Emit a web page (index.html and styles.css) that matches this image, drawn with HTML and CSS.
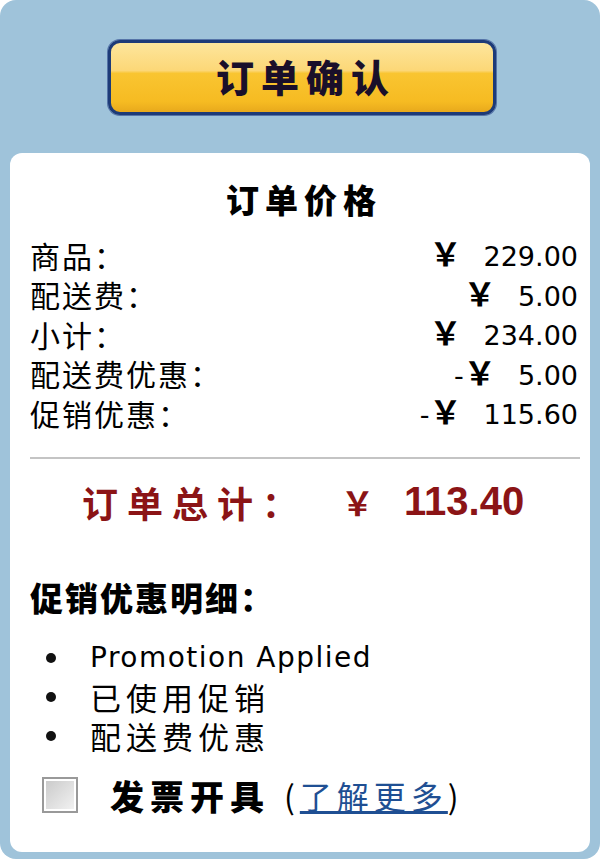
FILE: index.html
```html
<!DOCTYPE html>
<html lang="zh-CN">
<head>
    <meta charset="UTF-8">
    <title>订单确认</title>
    <link rel="stylesheet" href="styles.css">
</head>
<body>
    <div class="frame">
        <div class="btn-row">
            <button class="confirm-btn">订单确认</button>
        </div>

        <div class="panel">
            <h2 class="panel-title">订单价格</h2>

            <div class="price-list">
                <div class="price-row">
                    <span class="label">商品：</span>
                    <span class="value"><span class="yen">￥</span>229.00</span>
                </div>
                <div class="price-row">
                    <span class="label">配送费：</span>
                    <span class="value"><span class="yen">￥</span>5.00</span>
                </div>
                <div class="price-row">
                    <span class="label">小计：</span>
                    <span class="value"><span class="yen">￥</span>234.00</span>
                </div>
                <div class="price-row">
                    <span class="label">配送费优惠：</span>
                    <span class="value">-<span class="yen">￥</span>5.00</span>
                </div>
                <div class="price-row">
                    <span class="label">促销优惠：</span>
                    <span class="value">-<span class="yen">￥</span>115.60</span>
                </div>
            </div>

            <hr class="divider">

            <div class="total">
                <span class="total-label">订单总计：</span>
                <span class="total-yen">￥</span>
                <span class="total-num">113.40</span>
            </div>

            <h3 class="promo-title">促销优惠明细：</h3>
            <ul class="promo-list">
                <li class="latin">Promotion Applied</li>
                <li>已使用促销</li>
                <li>配送费优惠</li>
            </ul>

            <div class="invoice">
                <span class="checkbox"></span>
                <span class="invoice-label">发票开具</span>
                <span class="more">(<a href="#">了解更多</a>)</span>
            </div>
        </div>
    </div>
</body>
</html>
```

FILE: styles.css
```css
body {
    margin: 0;
    padding: 0;
    background-color: #fff;
    font-family: "Noto Sans CJK SC", "DejaVu Sans", sans-serif;
    color: #000;
}

.frame {
    width: 600px;
    height: 859px;
    box-sizing: border-box;
    background-color: #9fc3da;
    border-radius: 16px;
    padding: 40px 10px 7px 10px;
    display: flex;
    flex-direction: column;
}

.btn-row {
    display: flex;
    justify-content: center;
    margin-bottom: 38px;
}

.confirm-btn {
    width: 388px;
    height: 75px;
    margin-left: 4px;
    border: 3px solid #1d3b78;
    border-radius: 12px;
    background: linear-gradient(180deg, #fde69c 0%, #fcd777 40%, #f9c531 44%, #f6bb22 85%, #e8a91c 100%);
    box-shadow: 0 0 0 1px #5574a8;
    font-family: "Noto Sans CJK SC", sans-serif;
    font-size: 38px;
    font-weight: 900;
    letter-spacing: 7px;
    color: #1a0f2a;
    padding: 0 0 4px 8px;
}

.panel {
    flex: 1;
    background-color: #fff;
    border-radius: 12px;
    padding: 20px 12px 0 20px;
}

.panel-title {
    margin: 0 0 10px 0;
    text-align: center;
    font-size: 33px;
    font-weight: 900;
    letter-spacing: 6px;
    line-height: 52px;
}

.price-row {
    display: flex;
    justify-content: space-between;
    align-items: center;
    height: 39.5px;
    font-size: 30px;
    line-height: 38px;
}

.label {
    letter-spacing: 2px;
}

.value {
    font-family: "DejaVu Sans", sans-serif;
    font-size: 27px;
    letter-spacing: 0;
}

.yen {
    font-family: "Noto Sans CJK SC", sans-serif;
    font-size: 32px;
    font-weight: 700;
    margin-right: 22px;
}

.divider {
    border: none;
    border-top: 2px solid #c4c4c4;
    margin: 24px -2px 14px 0;
}

.total {
    display: flex;
    align-items: center;
    height: 58px;
    padding-left: 52px;
    color: #8b1416;
    font-weight: 700;
}

.total-label {
    font-size: 36px;
    letter-spacing: 9px;
}

.total-yen {
    font-size: 33px;
    margin-left: 34px;
}

.total-num {
    font-family: "Liberation Sans", sans-serif;
    font-size: 40px;
    margin-left: 30px;
}

.promo-title {
    margin: 44px 0 20px 0;
    font-size: 33px;
    font-weight: 900;
    letter-spacing: 2px;
    line-height: 44px;
}

.promo-list {
    list-style: none;
    margin: 0;
    padding-left: 16px;
    font-size: 31px;
    line-height: 38px;
    letter-spacing: 5px;
}

.promo-list li {
    display: flex;
    align-items: center;
    height: 39px;
}

.promo-list li::before {
    content: "";
    width: 10px;
    height: 10px;
    border-radius: 50%;
    background-color: #111;
    margin-right: 34px;
    flex-shrink: 0;
}

.promo-list .latin {
    font-family: "DejaVu Sans", sans-serif;
    font-size: 28px;
    letter-spacing: 1.5px;
}

.invoice {
    display: flex;
    align-items: center;
    margin-top: 15px;
    padding-left: 12px;
}

.checkbox {
    width: 32px;
    height: 32px;
    border: 2px solid #999;
    background: linear-gradient(135deg, #c8c8c8 0%, #f4f4f4 100%);
    box-shadow: inset 0 0 0 2px #fff;
}

.invoice-label {
    margin-left: 32px;
    font-size: 34px;
    font-weight: 900;
    letter-spacing: 6px;
}

.more {
    margin-left: 14px;
    font-size: 32px;
    letter-spacing: 5px;
}

.more a {
    color: #1f4f93;
    text-decoration: underline;
}
```
